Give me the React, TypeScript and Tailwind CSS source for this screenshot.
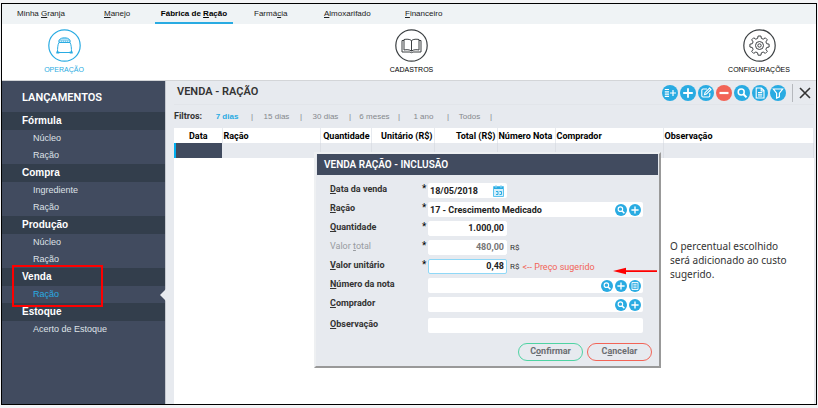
import type { ReactNode } from 'react';

interface MenuGroup {
  title: string;
  items: string[];
  active?: string;
}

const TABS = [
  { before: 'Minha ', key: 'G', after: 'ranja', className: 'w-[87px]' },
  { before: '', key: 'M', after: 'anejo', className: 'w-[51px]' },
  { before: 'Fábrica de ', key: 'R', after: 'ação', className: 'w-[78px] mr-[21px]', active: true },
  { before: 'Farmá', key: 'c', after: 'ia', className: 'w-[70px]' },
  { before: '', key: 'A', after: 'lmoxarifado', className: 'w-[81px]' },
  { before: '', key: 'F', after: 'inanceiro', className: 'w-[60px]' },
];

const GROUPS: MenuGroup[] = [
  { title: 'Fórmula', items: ['Núcleo', 'Ração'] },
  { title: 'Compra', items: ['Ingrediente', 'Ração'] },
  { title: 'Produção', items: ['Núcleo', 'Ração'] },
  { title: 'Venda', items: ['Ração'], active: 'Ração' },
  { title: 'Estoque', items: ['Acerto de Estoque'] },
];

const COLUMNS = [
  { label: 'Data', width: 'w-[47px]', align: 'text-center' },
  { label: 'Ração', width: 'w-[98px]', align: 'text-left' },
  { label: 'Quantidade', width: 'w-[51px]', align: 'text-right' },
  { label: 'Unitário (R$)', width: 'w-[63px]', align: 'text-right' },
  { label: 'Total (R$)', width: 'w-[63px]', align: 'text-right' },
  { label: 'Número Nota', width: 'w-[58px]', align: 'text-left' },
  { label: 'Comprador', width: 'w-[108px]', align: 'text-left' },
  { label: 'Observação', width: 'w-auto', align: 'text-left' },
];

const FILTERS = [
  { label: '7 dias', width: 'w-[44px]' },
  { label: '15 dias', width: 'w-[49px]' },
  { label: '30 dias', width: 'w-[49px]' },
  { label: '6 meses', width: 'w-[49px]' },
  { label: '1 ano', width: 'w-[49px]' },
  { label: 'Todos', width: 'w-[43px]' },
];

const ICONS: Record<string, ReactNode> = {
  duplicate: <path d="M2.800 4.500H7M2.800 6.800H7M2.800 9.100H7M2.800 11.400H7M8 8h6M11 5v6" strokeWidth="1.2" />,
  add: <path d="M8 3.200v9.600M3.200 8h9.600" strokeWidth="1.8" />,
  edit: <path d="M9 4H5Q3.800 4 3.800 5.200v5.600Q3.800 12 5 12h5.600q1.200 0 1.200-1.200V8M6.500 9.700l.5-2 4.600-4.600 1.400 1.400-4.600 4.600z" strokeWidth="1.1" />,
  remove: <path d="M3.500 8h9" strokeWidth="2.2" />,
  search: (
    <>
      <circle cx="7.2" cy="6.9" r="3" strokeWidth="1.5" />
      <path d="m9.500 9.200 3 3.200" strokeWidth="2" />
    </>
  ),
  report: <path d="M4.200 3h5.200l2.600 2.600V13H4.200zM9.200 3.200V6h2.600M6 7.500h4.200M6 9.200h4.200M6 11h4.200" strokeWidth="1.1" />,
  filter: <path d="M3.400 4h9.200L9.400 8.200v3.600L6.600 13V8.200z" strokeWidth="1.2" />,
  list: <path d="M4 3.300h8v9.400H4zM5.800 5.700h4.400M5.800 8h4.400M5.800 10.300h4.400" strokeWidth="1.2" />,
};

function IconButton({ icon, label, small, danger }: { icon: string; label: string; small?: boolean; danger?: boolean }) {
  return (
    <button
      type="button"
      aria-label={label}
      className={`shrink-0 rounded-full ${small ? 'size-3' : 'size-4'} ${danger ? 'bg-[#f26457]' : 'bg-[#29abe2]'}`}
    >
      <svg viewBox="0 0 16 16" className="size-full" fill="none" stroke="#fff">
        {ICONS[icon]}
      </svg>
    </button>
  );
}

function Section({ label, active, children }: { label: string; active?: boolean; children: ReactNode }) {
  return (
    <button
      type="button"
      className={`flex w-[88px] flex-col items-center ${active ? 'text-[#29abe2]' : 'text-[#3c4043]'}`}
    >
      <svg viewBox="0 0 33 33" className="size-[33px]" fill="none" stroke="currentColor" strokeWidth="1">
        <circle cx="16.5" cy="16.5" r="15.7" strokeWidth="1.2" />
        {children}
      </svg>
      <span className={`mt-[3px] text-[7px] leading-[10px] ${active ? '' : 'text-black'}`}>{label}</span>
    </button>
  );
}

function Sidebar() {
  return (
    <aside className="relative w-[164px] shrink-0 border-r border-[#c4c8cf] bg-[#414b5f] text-white">
      <h2 className="px-5 pt-[10px] pb-[7px] font-[Roboto] text-[11px] leading-[14px] font-semibold">LANÇAMENTOS</h2>
      {GROUPS.map((group) => (
        <div key={group.title}>
          <h3 className="h-[18px] bg-[#333e4c] pl-5 text-[10px] leading-[18px] font-bold">{group.title}</h3>
          {group.items.map((item) => (
            <a
              key={item}
              href="#"
              className={`relative block h-[17px] pl-[31px] text-[9px] leading-[17px] ${
                group.active === item ? 'text-[#29abe2]' : 'text-[#dfe2e7]'
              }`}
            >
              {item}
              {group.active === item && (
                <svg viewBox="0 0 6 12" className="absolute top-[3px] -right-px h-3 w-1.5" fill="#e7eaef">
                  <path d="M6 0v12L0 6z" />
                </svg>
              )}
            </a>
          ))}
        </div>
      ))}
      <div className="absolute top-[184px] left-[10px] h-[42px] w-[91px] border-2 border-[#fe0000]" />
    </aside>
  );
}

interface FieldProps {
  id: string;
  label: [string, string, string];
  required?: boolean;
  disabled?: boolean;
  children: ReactNode;
}

function Field({ id, label, required, disabled, children }: FieldProps) {
  return (
    <div className="flex h-[15px]">
      <label
        htmlFor={id}
        className={`w-[92px] text-[9px] leading-[13px] ${disabled ? 'text-[#989b9f]' : 'font-bold text-[#333]'}`}
      >
        {label[0]}
        <u>{label[1]}</u>
        {label[2]}
      </label>
      <span className="w-[6px] text-[10px] leading-[12px] text-black">{required && '*'}</span>
      {children}
    </div>
  );
}

function SaleDialog() {
  const wide = 'flex min-w-0 flex-1 items-center gap-[2px] rounded-xs bg-white pr-[2px]';
  const input = 'h-full min-w-0 flex-1 bg-transparent px-[2px] text-[9px] font-bold text-[#222] outline-none';
  const amount = 'w-[79px] rounded-xs border bg-white px-[2px] text-right text-[9px] font-bold outline-none';

  return (
    <div
      role="dialog"
      aria-label="Venda ração - inclusão"
      className="absolute top-[71px] left-[148px] w-[347px] border-2 border-t-[#eef0f2] border-r-[#999] border-b-[#999] border-l-[#eef0f2] bg-[#e7eaef] font-[Roboto]"
    >
      <h2 className="mr-px ml-px h-[21px] bg-[#414b5f] pl-[7px] text-[10px] leading-[21px] font-semibold text-white">
        VENDA RAÇÃO - INCLUSÃO
      </h2>
      <form className="flex flex-col gap-1 pt-2 pr-4 pb-[5px] pl-[14px]">
        <Field id="data" label={['', 'D', 'ata da venda']} required>
          <div className="flex w-[79px] items-center rounded-xs bg-white pr-[3px]">
            <input id="data" defaultValue="18/05/2018" className={input} />
            <svg viewBox="0 0 11 12" className="h-3 w-[11px]" fill="none" stroke="#29abe2">
              <path d="M.5 1.5h10v10H.5z" fill="#d4effb" stroke="#5cc3ee" />
              <path d="M1 3h9" strokeWidth="2" />
              <path d="M3 0v3M8 0v3" stroke="#8fd3f0" />
              <path d="M3 6.500h2v3H3M6.500 6.500h2v3h-2" />
            </svg>
          </div>
        </Field>
        <Field id="racao" label={['', 'R', 'ação']} required>
          <div className={wide}>
            <input id="racao" defaultValue="17 - Crescimento Medicado" className={input} />
            <IconButton small icon="search" label="Pesquisar ração" />
            <IconButton small icon="add" label="Adicionar ração" />
          </div>
        </Field>
        <Field id="quantidade" label={['', 'Q', 'uantidade']} required>
          <input id="quantidade" defaultValue="1.000,00" className={`${amount} border-white text-[#222]`} />
        </Field>
        <Field id="total" label={['Valor ', 't', 'otal']} required disabled>
          <input id="total" defaultValue="480,00" disabled className={`${amount} border-white text-[#777]`} />
          <span className="ml-[3px] text-[8px] leading-[16px] text-[#333]">R$</span>
        </Field>
        <Field id="unitario" label={['', 'V', 'alor unitário']} required>
          <input id="unitario" defaultValue="0,48" className={`${amount} border-[#8fd8f7] text-[#222]`} />
          <span className="ml-[3px] text-[8px] leading-[16px] text-[#333]">R$</span>
          <span className="ml-[3px] text-[9px] leading-[16px] text-[#f26457]">&lt;-- Preço sugerido</span>
        </Field>
        <Field id="nota" label={['', 'N', 'úmero da nota']}>
          <div className={wide}>
            <input id="nota" className={input} />
            <IconButton small icon="search" label="Pesquisar nota" />
            <IconButton small icon="add" label="Adicionar nota" />
            <IconButton small icon="list" label="Listar notas" />
          </div>
        </Field>
        <Field id="comprador" label={['', 'C', 'omprador']}>
          <div className={wide}>
            <input id="comprador" className={input} />
            <IconButton small icon="search" label="Pesquisar comprador" />
            <IconButton small icon="add" label="Adicionar comprador" />
          </div>
        </Field>
        <div className="pt-[2px]">
          <Field id="observacao" label={['', 'O', 'bservação']}>
            <div className={wide}>
              <input id="observacao" className={input} />
            </div>
          </Field>
        </div>
        <div className="-mr-[9px] flex justify-end gap-1 pt-[6px] text-[9px] font-bold text-[#6b6e72]">
          <button type="button" className="h-[18px] w-[65px] rounded-full border border-[#4fd3a3]">
            C<u>o</u>nfirmar
          </button>
          <button type="button" className="h-[18px] w-[65px] rounded-full border border-[#f26457]">
            C<u>a</u>ncelar
          </button>
        </div>
      </form>
    </div>
  );
}

function SalesPanel() {
  return (
    <main className="relative flex min-w-0 flex-1 flex-col bg-[#e7eaef] pr-[2px] pl-2">
      <header className="flex h-6 items-center justify-between border-b border-[#e2e5ea] pr-[3px] pl-[3px]">
        <h1 className="font-[Roboto] text-[11px] font-semibold text-[#333]">VENDA - RAÇÃO</h1>
        <div className="flex items-center gap-[2px]">
          <IconButton icon="duplicate" label="Duplicar" />
          <IconButton icon="add" label="Adicionar" />
          <IconButton icon="edit" label="Editar" />
          <IconButton icon="remove" label="Remover" danger />
          <IconButton icon="search" label="Pesquisar" />
          <IconButton icon="report" label="Relatório" />
          <IconButton icon="filter" label="Filtrar" />
          <span className="ml-1 h-[18px] w-px bg-[#b5b8bd]" />
          <button type="button" aria-label="Fechar" className="ml-1">
            <svg viewBox="0 0 12 12" className="size-3" stroke="#333" strokeWidth="1.6">
              <path d="m1 1 10 10M11 1 1 11" />
            </svg>
          </button>
        </div>
      </header>

      <div className="flex h-[23px] items-center text-[8px] text-[#85888c]">
        <span className="w-[35px] font-[Roboto] text-[9px] font-bold text-[#333]">Filtros:</span>
        {FILTERS.map((filter, index) => (
          <span key={filter.label} className={`flex items-center justify-between ${filter.width}`}>
            <button
              type="button"
              className={index === 0 ? 'w-[36px] font-bold text-[#29abe2]' : 'flex-1 text-center'}
            >
              {filter.label}
            </button>
            <span>|</span>
          </span>
        ))}
      </div>

      <div className="flex-1 bg-white">
        <table className="w-full table-fixed border-collapse font-[Roboto] text-[9px]">
          <thead>
            <tr className="h-[15px]">
              {COLUMNS.map((column) => (
                <th
                  key={column.label}
                  className={`border-r border-[#e7eaef] px-px leading-[14px] font-bold whitespace-nowrap text-black ${column.width} ${column.align}`}
                >
                  {column.label}
                </th>
              ))}
            </tr>
          </thead>
          <tbody>
            <tr className="h-[15px] bg-[#e7eaef]">
              {COLUMNS.map((column, index) => (
                <td
                  key={column.label}
                  className={index === 0 ? 'border-l-2 border-[#00aeef] bg-[#414b5f]' : 'border-r border-[#dcdfe5]'}
                />
              ))}
            </tr>
          </tbody>
        </table>
      </div>

      <SaleDialog />

      <div className="absolute top-[158px] left-[447px] flex items-start">
        <svg viewBox="0 0 44 8" className="mt-[28px] h-2 w-11" fill="#fe0000">
          <path d="M0 4 13 .7v6.600zM12 3.200h32v1.700H12z" />
        </svg>
        <p className="ml-[13px] w-[130px] font-['Noto_Sans'] text-[10px] leading-[14px] text-[#333]">
          O percentual escolhido
          <br />
          será adicionado ao custo
          <br />
          sugerido.
        </p>
      </div>
    </main>
  );
}

export default function App() {
  return (
    <div className="flex min-h-screen flex-col bg-[#f3f4f6] px-px pt-[3px] pb-[3px] font-['Liberation_Sans',Arial,sans-serif]">
      <div className="flex flex-1 flex-col border border-black bg-white">
        <nav className="flex h-5 bg-[#eff3f5] pl-[15px] text-[8px] text-[#222]">
          {TABS.map((tab) => (
            <a
              key={tab.key}
              href="#"
              className={`shrink-0 leading-[19px] whitespace-nowrap ${tab.className} ${
                tab.active ? 'border-b-2 border-[#29abe2] text-center font-bold text-black' : ''
              }`}
            >
              {tab.before}
              <u>{tab.key}</u>
              {tab.after}
            </a>
          ))}
        </nav>

        <div className="flex h-[57px] items-start justify-between border-b border-[#d3d5d8] pt-[5px] pr-[13px] pl-[18px]">
          <Section label="OPERAÇÃO" active>
            <path d="M11 13.500c-1.300 2-1.500 6-1.500 10h14c0-4-.2-8-1.500-10z" />
            <path d="M11 13.500c-1-2 .5-3.600 2.500-4.300 2-.7 4-.7 6 0s3.500 2.300 2.500 4.300z" fill="currentColor" fillOpacity=".6" strokeWidth=".8" />
            <path d="M12 12.300h9M13.500 10.500h6.500" strokeDasharray="1 1" stroke="#fff" strokeWidth=".8" />
            <path d="M8.300 23.500h3M21.700 23.500h3" strokeWidth="2" />
          </Section>
          <Section label="CADASTROS">
            <path d="M16.500 11.500c-2-1.500-5-1.500-7.500-1v10.500c2.500-.5 5.500-.5 7.500 1 2-1.500 5-1.500 7.500-1V10.500c-2.500-.5-5.500-.5-7.500 1zM16.500 11.500V22" />
            <path d="M9 11.500H7v11.500h8l1.500.7 1.500-.7h8V11.500h-2" />
          </Section>
          <Section label="CONFIGURAÇÕES">
            <path d="M15.100 7h2.800l.5 2.400 1.800.8 2.100-1.400 2 2-1.400 2.100.8 1.800 2.400.5v2.800l-2.400.5-.8 1.800 1.400 2.100-2 2-2.100-1.400-1.800.8-.5 2.400h-2.800l-.5-2.400-1.800-.8-2.100 1.400-2-2 1.400-2.100-.8-1.800-2.400-.5v-2.800l2.400-.5.8-1.800-1.400-2.100 2-2 2.100 1.400 1.800-.8z" />
            <circle cx="16.500" cy="16.500" r="4" />
            <circle cx="16.500" cy="16.500" r="1.700" />
          </Section>
        </div>

        <div className="flex flex-1">
          <Sidebar />
          <SalesPanel />
        </div>
      </div>
    </div>
  );
}
